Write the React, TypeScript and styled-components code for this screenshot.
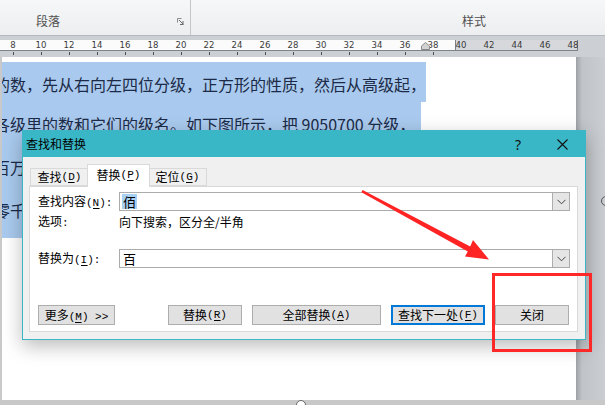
import React from 'react';
import styled, { createGlobalStyle } from 'styled-components';

const Global = createGlobalStyle`
  html, body { margin: 0; padding: 0; }
  body {
    width: 605px;
    height: 405px;
    overflow: hidden;
    background: #fff;
    font-family: "Noto Sans CJK SC", "Noto Sans", sans-serif;
  }
`;

const Screen = styled.div`
  position: relative;
  width: 605px;
  height: 405px;
  overflow: hidden;
  display: flex;
  flex-direction: column;
  background: #ccd0d5;
`;

/* ---------- ribbon ---------- */
const Ribbon = styled.div`
  flex: none;
  height: 35px;
  display: flex;
  background: linear-gradient(#f6f7f8, #eceef0);
  border-bottom: 1px solid #b4b9bf;
`;

const RibbonGroup = styled.div<{ $w?: number; $pad: number }>`
  ${(p) => (p.$w ? `width:${p.$w}px; flex:none;` : 'flex:1;')}
  box-sizing: border-box;
  display: flex;
  align-items: flex-start;
  justify-content: space-between;
  padding: 13px 6px 0 ${(p) => p.$pad}px;
  border-right: ${(p) => (p.$w ? '1px solid #c3c7cc' : 'none')};
`;

const GroupLabel = styled.span`
  font-size: 12px;
  line-height: 16px;
  color: #505050;
`;

const Launcher = styled.svg`
  margin-top: 5px;
`;

/* ---------- ruler ---------- */
const RulerArea = styled.div`
  flex: none;
  height: 21px;
  box-sizing: border-box;
  padding-top: 4px;
  background: #ccd0d5;
`;

const Ruler = styled.div`
  position: relative;
  width: 578px;
  height: 10px;
  overflow: hidden;
  border-bottom: 1px solid #7e848b;
  background: linear-gradient(
    to right,
    #fbfbfb 0 455px,
    #7b8087 455px 456px,
    #d6d8db 456px 577px,
    #7b8087 577px
  );
  display: flex;
`;

const RulerCell = styled.span`
  flex: none;
  width: 28px;
  text-align: center;
  font-family: "DejaVu Sans Condensed", "DejaVu Sans", sans-serif;
  font-size: 9.5px;
  line-height: 10px;
  color: #3a3a3a;
`;

const RulerLead = styled.span`
  flex: none;
  width: 0;
  margin-left: -1px;
`;

const IndentMark = styled.svg`
  position: absolute;
  left: 421px;
  top: 2px;
`;

const TickRow = styled.div`
  display: flex;
  height: 6px;
  margin-left: -1px;
`;

const TickCell = styled.span`
  flex: none;
  width: 28px;
  display: flex;
  justify-content: center;
  padding-top: 1px;
  &::after {
    content: '';
    width: 1px;
    height: 3px;
    background: #4a4e54;
  }
`;

/* ---------- document ---------- */
const Workspace = styled.div`
  flex: 1;
  display: flex;
  min-height: 0;
`;

const Page = styled.div`
  width: 576px;
  flex: none;
  box-sizing: border-box;
  background: #fff;
  border-left: 2px solid #c9c9c9;
  padding-top: 5px;
  overflow: hidden;
`;

const Gutter = styled.div`
  flex: 1;
  background: linear-gradient(to right, #9ea1a5, #c0c3c7 6px, #cacdd1);
  display: flex;
  flex-direction: column;
  overflow: hidden;
`;

const Handle = styled.span`
  width: 8px;
  height: 8px;
  border: 1px solid #555;
  border-radius: 50%;
  margin: 139px 0 0 25px;
  flex: none;
`;

const Line = styled.div<{ $h: number; $shift: number; $tail?: number }>`
  width: fit-content;
  height: ${(p) => p.$h}px;
  box-sizing: border-box;
  padding-top: ${(p) => Math.max(p.$shift, 0)}px;
  padding-bottom: ${(p) => Math.max(-p.$shift, 0)}px;
  padding-right: ${(p) => p.$tail ?? 0}px;
  margin-left: -8px;
  background: #a9caee;
  color: #1c2a47;
  font-size: 16px;
  line-height: ${(p) => p.$h - Math.abs(p.$shift)}px;
  white-space: nowrap;
`;

const BottomStrip = styled.div`
  flex: none;
  height: 5px;
  background: #c8c8c8;
  display: flex;
  justify-content: center;
  overflow: hidden;
`;

const BottomKnob = styled.span`
  width: 8px;
  height: 8px;
  border: 1px solid #666;
  border-radius: 50%;
  background: #fff;
  margin-left: -4px;
`;

/* ---------- dialog ---------- */
const Dialog = styled.div`
  position: absolute;
  left: 22px;
  top: 130px;
  width: 564px;
  height: 210px;
  box-sizing: border-box;
  border: 1px solid #3ab6c6;
  background: #f0f0f0;
  box-shadow: 0 6px 18px rgba(0, 0, 0, 0.27);
  display: flex;
  flex-direction: column;
  font-size: 12px;
  color: #000;
`;

const TitleBar = styled.div`
  flex: none;
  height: 26px;
  background: #3ab7c6;
  display: flex;
  align-items: center;
  padding-left: 3px;
`;

const TitleText = styled.span`
  font-size: 12px;
  line-height: 16px;
`;

const TitleButton = styled.span<{ $w: number }>`
  width: ${(p) => p.$w}px;
  height: 26px;
  display: flex;
  align-items: center;
  justify-content: center;
  font-family: "Noto Sans", sans-serif;
  font-size: 14px;
  color: #111;
`;

const TitleSpacer = styled.span`
  flex: 1;
`;

const TabStrip = styled.div`
  flex: none;
  display: flex;
  align-items: flex-end;
  height: 23px;
  margin: 6px 0 0 7px;
`;

const Tab = styled.div<{ $active?: boolean }>`
  position: relative;
  box-sizing: border-box;
  width: ${(p) => (p.$active ? 63 : 59)}px;
  height: ${(p) => (p.$active ? 23 : 18)}px;
  margin: 0 ${(p) => (p.$active ? -2 : 0)}px ${(p) => (p.$active ? -1 : 0)}px;
  z-index: ${(p) => (p.$active ? 1 : 0)};
  border: 1px solid #d9d9d9;
  border-bottom: ${(p) => (p.$active ? 'none' : '1px solid #d9d9d9')};
  background: ${(p) => (p.$active ? '#fff' : '#f0f0f0')};
  display: flex;
  align-items: center;
  justify-content: center;
  padding-bottom: ${(p) => (p.$active ? 2 : 0)}px;
  line-height: 16px;
`;

const Panel = styled.div`
  flex: 1;
  margin: 0 7px 7px 6px;
  background: #fff;
  border: 1px solid #d9d9d9;
  padding: 5px 7px 0 8px;
  display: flex;
  flex-direction: column;
`;

const FieldRow = styled.div<{ $top?: number; $h: number }>`
  display: grid;
  grid-template-columns: 81px 1fr;
  align-items: center;
  height: ${(p) => p.$h}px;
  margin-top: ${(p) => p.$top ?? 0}px;
  line-height: 16px;
`;

const Combo = styled.div`
  height: 19px;
  box-sizing: border-box;
  border: 1px solid #ababab;
  background: #fff;
  display: flex;
  align-items: center;
  padding-left: 2px;
`;

const ComboValue = styled.span<{ $selected?: boolean }>`
  font-size: 13px;
  line-height: 15px;
  padding: 0 1px;
  background: ${(p) => (p.$selected ? '#a8d0f3' : 'transparent')};
`;

const DropButton = styled.span`
  margin-left: auto;
  align-self: stretch;
  width: 16px;
  border-left: 1px solid #adadad;
  background: #e5e5e5;
  display: flex;
  align-items: center;
  justify-content: center;
`;

/* half-width ASCII run, e.g. "(N)" access keys; $key underlines the 2nd cell */
const Mn = styled.span<{ $key?: boolean }>`
  display: inline-block;
  font-family: "Liberation Mono", monospace;
  font-size: 11px;
  line-height: 14px;
  white-space: pre;
  ${(p) =>
    p.$key
      ? `background: linear-gradient(currentColor, currentColor) no-repeat;
         background-size: 1ch 1px;
         background-position: 1ch 12px;`
      : ''}
`;

const ButtonRow = styled.div`
  display: flex;
  justify-content: space-between;
  margin-top: 37px;
  padding-right: 1px;
`;

const ButtonGroup = styled.div`
  display: flex;
  gap: 10px;
`;

const Button = styled.div<{ $w: number; $default?: boolean }>`
  width: ${(p) => p.$w}px;
  height: 20px;
  box-sizing: border-box;
  border: ${(p) => (p.$default ? '2px solid #0078d7' : '1px solid #adadad')};
  background: #e1e1e1;
  display: flex;
  align-items: center;
  justify-content: center;
  font-size: 12px;
  line-height: 16px;
  white-space: pre;
`;

/* ---------- annotations drawn on top ---------- */
const Marker = styled.div`
  position: absolute;
  left: 492px;
  top: 273px;
  width: 100px;
  height: 79px;
  box-sizing: border-box;
  border: 3px solid #ff2828;
  pointer-events: none;
`;

const ArrowLayer = styled.svg`
  position: absolute;
  left: 0;
  top: 0;
  pointer-events: none;
`;

const Key = ({ c }: { c: string }) => <Mn $key>{`(${c})`}</Mn>;

const Chevron = () => (
  <svg width="9" height="6" viewBox="0 0 9 6">
    <polyline points="0.5,0.8 4.5,4.8 8.5,0.8" fill="none" stroke="#444" strokeWidth="1" />
  </svg>
);

const rulerNumbers = Array.from({ length: 21 }, (_, i) => 8 + i * 2);
const ticks = Array.from({ length: 16 }, (_, i) => i);

export default function App() {
  return (
    <>
      <Global />
      <Screen>
        <Ribbon>
          <RibbonGroup $w={191} $pad={36}>
            <GroupLabel>段落</GroupLabel>
            <Launcher width="7" height="7" viewBox="0 0 7 7">
              <path d="M0.5 4.5V0.5H4.5" fill="none" stroke="#8a8a8a" />
              <path d="M2 2L6 6M6 3V6.5M3 6.5H6.5" fill="none" stroke="#6a6a6a" />
            </Launcher>
          </RibbonGroup>
          <RibbonGroup $pad={271}>
            <GroupLabel>样式</GroupLabel>
          </RibbonGroup>
        </Ribbon>

        <RulerArea>
          <Ruler>
            <RulerLead />
            {rulerNumbers.map((n) => (
              <RulerCell key={n}>{n}</RulerCell>
            ))}
            <IndentMark width="9" height="8" viewBox="0 0 9 8">
              <polygon points="4.5,0.5 8.5,4 8.5,7.5 0.5,7.5 0.5,4" fill="#d2d2d2" stroke="#8a8a8a" />
            </IndentMark>
          </Ruler>
          <TickRow>
            {ticks.map((t) => (
              <TickCell key={t} />
            ))}
          </TickRow>
        </RulerArea>

        <Workspace>
          <Page>
            <Line $h={40} $shift={4}>的数，先从右向左四位分级，正方形的性质，然后从高级起，</Line>
            <Line $h={42} $shift={3} $tail={6}>各级里的数和它们的级名。如下图所示，把 9050700 分级，</Line>
            <Line $h={47} $shift={0}>百万位上是 9，万级上是 0507，个级上是 0000，读作九百零五万零七百</Line>
            <Line $h={47} $shift={-8}>零千位上的 0 不读，九百零五万零七百。读数时要注意每级末尾的零</Line>
          </Page>
          <Gutter>
            <Handle />
          </Gutter>
        </Workspace>

        <BottomStrip>
          <BottomKnob />
        </BottomStrip>

        <Dialog>
          <TitleBar>
            <TitleText>查找和替换</TitleText>
            <TitleSpacer />
            <TitleButton $w={30}>?</TitleButton>
            <TitleButton $w={7} />
            <TitleButton $w={45}>
              <svg width="11" height="11" viewBox="0 0 11 11">
                <path d="M0.5 0.5L10.5 10.5M10.5 0.5L0.5 10.5" stroke="#111" strokeWidth="1.1" />
              </svg>
            </TitleButton>
          </TitleBar>

          <TabStrip>
            <Tab>
              查找<Key c="D" />
            </Tab>
            <Tab $active>
              替换<Key c="P" />
            </Tab>
            <Tab>
              定位<Key c="G" />
            </Tab>
          </TabStrip>

          <Panel>
            <FieldRow $h={19}>
              <span>
                查找内容<Key c="N" />
                <Mn>:</Mn>
              </span>
              <Combo>
                <ComboValue $selected>佰</ComboValue>
                <DropButton>
                  <Chevron />
                </DropButton>
              </Combo>
            </FieldRow>
            <FieldRow $h={16} $top={2}>
              <span>
                选项<Mn>:</Mn>
              </span>
              <span>向下搜索，区分全/半角</span>
            </FieldRow>
            <FieldRow $h={19} $top={20}>
              <span>
                替换为<Key c="I" />
                <Mn>:</Mn>
              </span>
              <Combo>
                <ComboValue>百</ComboValue>
                <DropButton>
                  <Chevron />
                </DropButton>
              </Combo>
            </FieldRow>

            <ButtonRow>
              <Button $w={77}>
                <span>
                  更多<Key c="M" />
                  <Mn>{' >>'}</Mn>
                </span>
              </Button>
              <ButtonGroup>
                <Button $w={74}>
                  替换<Key c="R" />
                </Button>
                <Button $w={129}>
                  全部替换<Key c="A" />
                </Button>
                <Button $w={94} $default>
                  查找下一处<Key c="F" />
                </Button>
                <Button $w={74}>关闭</Button>
              </ButtonGroup>
            </ButtonRow>
          </Panel>
        </Dialog>

        <Marker />
        <ArrowLayer width="605" height="405" viewBox="0 0 605 405">
          <polygon
            points="362.6,190 470.2,246.4 473,240 489,259.5 465,256.5 467.8,251.4 361.4,192.2"
            fill="#ff2424"
          />
        </ArrowLayer>
      </Screen>
    </>
  );
}
